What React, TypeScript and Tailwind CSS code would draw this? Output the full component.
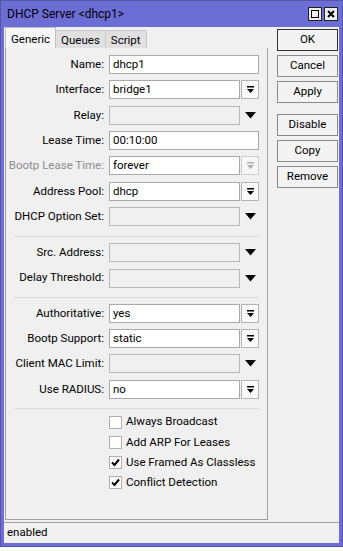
import React from 'react';

const font = { fontFamily: 'Roboto, "Liberation Sans", Arial, sans-serif' };

function DropIcon({ disabled }: { disabled?: boolean }) {
  const c = disabled ? '#b0b0b0' : '#000';
  return (
    <svg width="9" height="9" viewBox="0 0 9 9">
      <rect x="1" y="1" width="7" height="1.5" fill={c} />
      <path d="M1 4 H8 L4.5 8 Z" fill={c} />
    </svg>
  );
}

function Arrow() {
  return (
    <svg width="11" height="7" viewBox="0 0 11 7">
      <path d="M0 0 H11 L5.5 6.5 Z" fill="#000" />
    </svg>
  );
}

type Kind = 'text' | 'combo' | 'empty' | 'disabled';

function Row({ label, value, kind, dim }: { label: string; value?: string; kind: Kind; dim?: boolean }) {
  return (
    <div className="flex items-center h-[25.3px]">
      <div className={`w-[103px] pr-[5px] flex justify-end whitespace-nowrap ${dim ? 'text-[#8d8d8d]' : 'text-black'}`}>
        <span>{label}:</span>
      </div>
      {kind === 'text' && (
        <div className="w-[150px] h-[19px] border border-[#aaaaaa] bg-white flex items-center pl-[3px]">{value}</div>
      )}
      {kind === 'combo' && (
        <>
          <div className="w-[131px] h-[19px] border border-[#aaaaaa] bg-white flex items-center pl-[3px]">{value}</div>
          <div className="ml-[1px] w-[18px] h-[19px] border border-[#b4b4b4] bg-[#fafafa] flex items-center justify-center">
            <DropIcon />
          </div>
        </>
      )}
      {kind === 'disabled' && (
        <>
          <div className="w-[131px] h-[19px] border border-[#aaaaaa] bg-white flex items-center pl-[3px]">{value}</div>
          <div className="ml-[1px] w-[18px] h-[19px] border border-[#cfcfcf] bg-[#f6f6f6] flex items-center justify-center">
            <DropIcon disabled />
          </div>
        </>
      )}
      {kind === 'empty' && (
        <>
          <div className="w-[131px] h-[19px] border border-[#b9b9b9] bg-[#f0f0f0]" />
          <div className="w-[19px] flex items-center justify-center ml-[1px]">
            <Arrow />
          </div>
        </>
      )}
    </div>
  );
}

function Sep({ h, top }: { h: string; top: string }) {
  return (
    <div className={h}>
      <div className={`${top} ml-[8px] w-[245px] border-t border-[#dcdcdc]`} />
    </div>
  );
}

function Check({ label, on }: { label: string; on?: boolean }) {
  return (
    <div className="flex items-center h-[20.3px] pl-[103px]">
      <div className="w-[13px] h-[13px] border border-[#b0b0b0] bg-white flex items-center justify-center">
        {on && (
          <svg width="9" height="9" viewBox="0 0 9 9">
            <path d="M1 4.5 L3.5 7 L8 1.5" stroke="#000" strokeWidth="2" fill="none" />
          </svg>
        )}
      </div>
      <span className="ml-[4px]">{label}</span>
    </div>
  );
}

function Btn({ label, bold }: { label: string; bold?: boolean }) {
  return (
    <div
      className={`w-[61px] h-[22px] flex items-center justify-center bg-[#f3f3f3] border ${
        bold ? 'border-[#333]' : 'border-[#8a8a8a]'
      }`}
    >
      {label}
    </div>
  );
}

export default function App() {
  return (
    <div className="w-[343px] h-[551px] bg-white text-[11.5px] text-black" style={font}>
      <div className="w-[343px] h-[547px] bg-[#6d6dd6] border border-[#5555aa] flex flex-col">
        {/* title bar */}
        <div className="h-[26px] flex items-center pl-[6px] pr-[4px] text-[12px]">
          <span className="flex-1">DHCP Server &lt;dhcp1&gt;</span>
          <div className="flex gap-[2px]">
            <div className="w-[14px] h-[14px] bg-[#eeeeee] border border-[#222] flex items-center justify-center">
              <div className="w-[8px] h-[8px] border border-black" />
            </div>
            <div className="w-[14px] h-[14px] bg-[#eeeeee] border border-[#222] flex items-center justify-center">
              <svg width="8" height="8" viewBox="0 0 8 8">
                <path d="M1 1 L7 7 M7 1 L1 7" stroke="#000" strokeWidth="2" />
              </svg>
            </div>
          </div>
        </div>

        <div className="flex-1 mx-[3px] mb-[3px] bg-[#f0f0f0] flex flex-col">
          <div className="flex-1 flex">
            {/* left: tabs + panel */}
            <div className="w-[264px] flex flex-col pl-[1px]">
              <div className="flex items-end h-[21px]">
                <div className="h-[21px] px-[5px] pt-[3px] bg-[#f7f7f7] border border-b-0 border-[#c0c0c0]">Generic</div>
                <div className="h-[18px] px-[5px] pt-[1px] bg-[#e0e0e0] border border-l-0 border-b-0 border-[#c8c8c8]">Queues</div>
                <div className="h-[18px] px-[5px] pt-[1px] bg-[#e0e0e0] border border-l-0 border-b-0 border-[#c8c8c8]">Script</div>
              </div>
              <div className="flex-1 border border-t-0 border-[#a0a0a0] pt-[4px] flex flex-col">
                <Row label="Name" value="dhcp1" kind="text" />
                <Row label="Interface" value="bridge1" kind="combo" />
                <Row label="Relay" kind="empty" />
                <Row label="Lease Time" value="00:10:00" kind="text" />
                <Row label="Bootp Lease Time" value="forever" kind="disabled" dim />
                <Row label="Address Pool" value="dhcp" kind="combo" />
                <Row label="DHCP Option Set" kind="empty" />
                <Sep h="h-[11px]" top="mt-[7px]" />
                <Row label="Src. Address" kind="empty" />
                <Row label="Delay Threshold" kind="empty" />
                <Sep h="h-[10px]" top="mt-[6px]" />
                <Row label="Authoritative" value="yes" kind="combo" />
                <Row label="Bootp Support" value="static" kind="combo" />
                <Row label="Client MAC Limit" kind="empty" />
                <Row label="Use RADIUS" value="no" kind="combo" />
                <Sep h="h-[10px]" top="mt-[6px]" />
                <Check label="Always Broadcast" />
                <Check label="Add ARP For Leases" />
                <Check label="Use Framed As Classless" on />
                <Check label="Conflict Detection" on />
              </div>
            </div>
            {/* right: buttons */}
            <div className="flex flex-col pl-[9px] pt-[2px] gap-[4px]">
              <Btn label="OK" bold />
              <Btn label="Cancel" />
              <Btn label="Apply" />
              <div className="h-[3px]" />
              <Btn label="Disable" />
              <Btn label="Copy" />
              <Btn label="Remove" />
            </div>
          </div>
          <div className="h-[21px] mt-[2px] border-t border-[#a0a0a0] flex items-center pl-[3px]">enabled</div>
        </div>
      </div>
    </div>
  );
}
